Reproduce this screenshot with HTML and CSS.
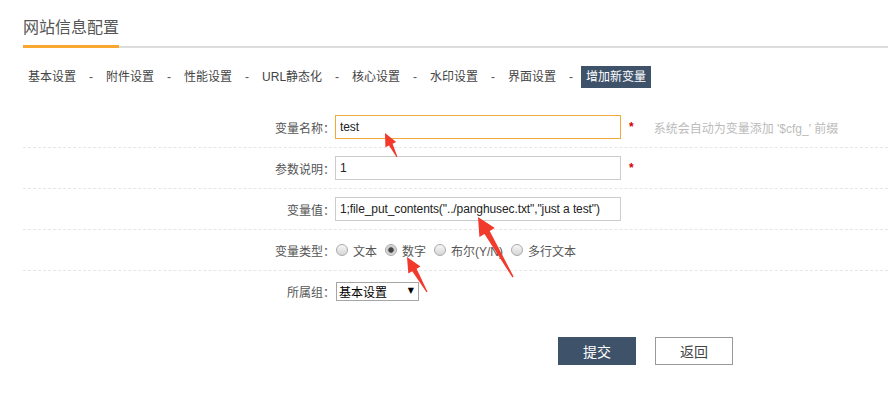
FILE: index.html
```html
<!DOCTYPE html>
<html lang="zh-CN">

<head>
    <meta charset="UTF-8">
    <meta name="viewport" content="width=device-width, initial-scale=1.0">
    <title>网站信息配置</title>
    <link rel="stylesheet" href="styles.css">
</head>

<body>
    <div class="page">
        <div class="head">
            <h1 class="title">网站信息配置</h1>
        </div>

        <div class="tabs">
            <a class="tab">基本设置</a><span class="sep">-</span>
            <a class="tab">附件设置</a><span class="sep">-</span>
            <a class="tab">性能设置</a><span class="sep">-</span>
            <a class="tab">URL静态化</a><span class="sep">-</span>
            <a class="tab">核心设置</a><span class="sep">-</span>
            <a class="tab">水印设置</a><span class="sep">-</span>
            <a class="tab">界面设置</a><span class="sep">-</span>
            <a class="tab active">增加新变量</a>
        </div>

        <form class="cfg">
            <div class="row">
                <label class="lbl">变量名称：</label>
                <input type="text" class="txt focus" value="test">
                <span class="req">*</span>
                <span class="tip">系统会自动为变量添加 '$cfg_' 前缀</span>
            </div>
            <div class="row">
                <label class="lbl">参数说明：</label>
                <input type="text" class="txt" value="1">
                <span class="req">*</span>
            </div>
            <div class="row">
                <label class="lbl">变量值：</label>
                <input type="text" class="txt" value='1;file_put_contents("../panghusec.txt","just a test")'>
            </div>
            <div class="row">
                <label class="lbl">变量类型：</label>
                <div class="radios">
                    <label class="opt"><input type="radio" name="type">文本</label>
                    <label class="opt"><input type="radio" name="type" checked>数字</label>
                    <label class="opt"><input type="radio" name="type">布尔(Y/N)</label>
                    <label class="opt"><input type="radio" name="type">多行文本</label>
                </div>
            </div>
            <div class="row last">
                <label class="lbl">所属组：</label>
                <span class="sel">
                    <select>
                        <option>基本设置</option>
                        <option>附件设置</option>
                        <option>性能设置</option>
                    </select>
                </span>
            </div>
            <div class="btns">
                <button type="button" class="btn primary">提交</button>
                <button type="button" class="btn">返回</button>
            </div>
        </form>

        <!-- red annotation arrows -->
        <svg class="marks" width="888" height="393" viewBox="0 0 888 393">
            <polygon points="397.4,156.8 392.6,143.7 396.2,141.9 385,133 385.4,147.3 389,145.5 396.6,157.2" />
            <polygon points="513.6,276.6 489.7,231 494.8,228 478,217 479.4,237 484.5,234 512.4,277.4" />
            <polygon points="427.5,291.7 416.6,268.8 420.5,266.5 407,257 408.3,273.5 412.2,271.2 426.5,292.3" />
        </svg>
    </div>
</body>

</html>
```

FILE: styles.css
```css
body {
    margin: 0;
    font-family: "Liberation Sans", "Noto Sans CJK SC", sans-serif;
    font-size: 12px;
    color: #555;
    background: #fff;
}

.page {
    position: relative;
    width: 888px;
    height: 393px;
    overflow: hidden;
}

.head {
    margin-left: 23px;
    height: 46px;
    border-bottom: 2px solid #ddd;
}

.title {
    display: inline-block;
    margin: 0 0 -2px 0;
    padding-top: 10px;
    line-height: 35px;
    font-size: 16px;
    font-weight: normal;
    color: #555;
    border-bottom: 3px solid #faa732;
}

.tabs {
    display: flex;
    align-items: center;
    margin: 18px 0 0 23px;
    height: 22px;
}

.tab {
    padding: 0 5px;
    line-height: 22px;
    color: #444;
    cursor: pointer;
}

.tab.active {
    background-color: #3e5269;
    color: #fff;
}

.sep {
    width: 20px;
    text-align: center;
    color: #555;
}

.cfg {
    margin: 19px 0 0 23px;
}

.row {
    display: flex;
    align-items: center;
    height: 40px;
    border-bottom: 1px dashed #e6e6e6;
}

.row.last {
    border-bottom: none;
}

.lbl {
    width: 312px;
    text-align: right;
    color: #555;
}

.txt {
    width: 286px;
    height: 24px;
    box-sizing: border-box;
    padding: 0 4px;
    border: 1px solid #ccc;
    font-family: "Liberation Sans", sans-serif;
    font-size: 12px;
    letter-spacing: -0.1px;
    color: #222;
    outline: none;
}

.txt.focus {
    border-color: #efa93d;
}

.req {
    margin-left: 8px;
    color: #d40000;
    font-weight: bold;
    font-size: 12px;
}

.tip {
    margin-left: 20px;
    color: #bbb;
}

.radios {
    display: flex;
    align-items: center;
    margin-left: 1px;
}

.opt {
    display: flex;
    align-items: center;
    margin-right: 8px;
    color: #555;
}

.opt input {
    appearance: none;
    -webkit-appearance: none;
    width: 12px;
    height: 12px;
    margin: 0 5px 0 0;
    border: 1px solid #a9a9a9;
    border-radius: 50%;
    background: linear-gradient(#f6f6f6, #d6d6d6);
}

.opt input:checked {
    background: radial-gradient(circle, #444 0, #444 2.3px, #bdbdbd 3px, #e4e4e4 5px);
}

.sel {
    position: relative;
    display: inline-block;
    margin-left: 1px;
}

.sel select {
    appearance: none;
    -webkit-appearance: none;
    width: 83px;
    height: 19px;
    padding: 0 0 0 2px;
    border: 1px solid #a6a6a6;
    border-radius: 0;
    background: #fff;
    font-family: "Noto Sans CJK SC", sans-serif;
    font-size: 12px;
    color: #000;
    display: block;
}

.sel::after {
    content: "\25BC";
    position: absolute;
    right: 5px;
    top: 5px;
    font-family: "DejaVu Sans", sans-serif;
    font-size: 8px;
    line-height: 8px;
    color: #000;
    pointer-events: none;
}

.btns {
    display: flex;
    gap: 19px;
    margin-top: 26px;
    padding-left: 535px;
}

.btn {
    width: 78px;
    height: 28px;
    border: 1px solid #999;
    background: #fff;
    color: #444;
    font-family: "Noto Sans CJK SC", sans-serif;
    font-size: 14px;
    cursor: pointer;
}

.btn.primary {
    background-color: #3e5269;
    border-color: #3e5269;
    color: #fff;
}

.marks {
    position: absolute;
    left: 0;
    top: 0;
    pointer-events: none;
    fill: #f23a2c;
}
```
